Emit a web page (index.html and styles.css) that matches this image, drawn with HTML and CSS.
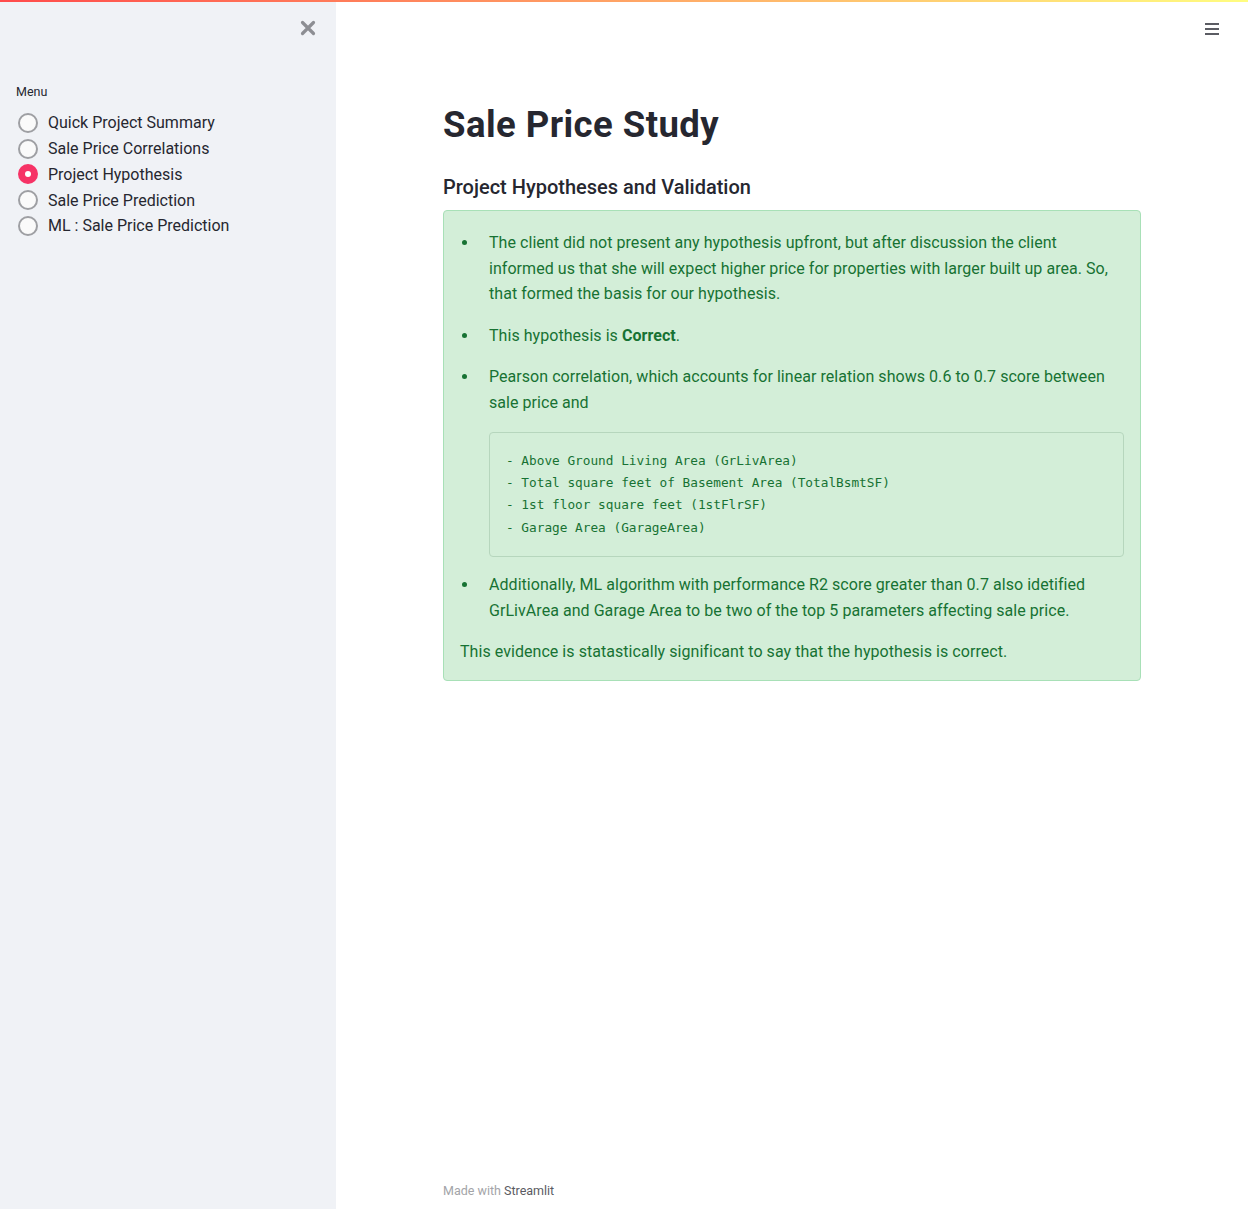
FILE: index.html
```html
<!DOCTYPE html>
<html>
<head>
<meta charset="utf-8">
<link rel="stylesheet" href="styles.css">
</head>
<body>
<div class="decoration"></div>
<div class="app">
  <aside class="sidebar">
    <div class="close-row">
      <svg class="close" width="16" height="16" viewBox="0 0 16 16"><path d="M2.5 2.5 L13.5 13.5 M13.5 2.5 L2.5 13.5" stroke="#8d8e93" stroke-width="3.2" stroke-linecap="round"/></svg>
    </div>
    <div class="menu-label">Menu</div>
    <div class="radios">
      <div class="radio"><span class="dot"></span><span>Quick Project Summary</span></div>
      <div class="radio"><span class="dot"></span><span>Sale Price Correlations</span></div>
      <div class="radio on"><span class="dot"></span><span>Project Hypothesis</span></div>
      <div class="radio"><span class="dot"></span><span>Sale Price Prediction</span></div>
      <div class="radio"><span class="dot"></span><span>ML : Sale Price Prediction</span></div>
    </div>
  </aside>
  <main class="main">
    <div class="topbar">
      <svg class="burger" width="16" height="14" viewBox="0 0 16 14"><path d="M1 2h14M1 7h14M1 12h14" stroke="#262730" stroke-width="1.6"/></svg>
    </div>
    <div class="block">
      <h1 class="title">Sale Price Study</h1>
      <h3 class="subtitle">Project Hypotheses and Validation</h3>
      <div class="success">
        <ul class="list">
          <li>The client did not present any hypothesis upfront, but after discussion the client informed us that she will expect higher price for properties with larger built up area. So, that formed the basis for our hypothesis.</li>
          <li>This hypothesis is <b>Correct</b>.</li>
          <li class="with-code">Pearson correlation, which accounts for linear relation shows 0.6 to 0.7 score between sale price and
            <pre class="code">- Above Ground Living Area (GrLivArea)
- Total square feet of Basement Area (TotalBsmtSF)
- 1st floor square feet (1stFlrSF)
- Garage Area (GarageArea)</pre>
          </li>
          <li>Additionally, ML algorithm with performance R2 score greater than 0.7 also idetified GrLivArea and Garage Area to be two of the top 5 parameters affecting sale price.</li>
        </ul>
        <p class="last">This evidence is statastically significant to say that the hypothesis is correct.</p>
      </div>
    </div>
    <footer class="footer">Made with <span class="brand">Streamlit</span></footer>
  </main>
</div>
</body>
</html>
```

FILE: styles.css
```css
* { box-sizing: border-box; }
html, body { margin: 0; padding: 0; height: 100%; }
body {
  font-family: Roboto, "Noto Sans", "Liberation Sans", sans-serif;
  color: #262730;
  background: #fff;
}
.decoration {
  position: fixed; top: 0; left: 0; right: 0; height: 2px; z-index: 10;
  background: linear-gradient(90deg, #ff4b4b, #fffd80);
}
.app { display: flex; min-height: 1209px; }
.sidebar {
  width: 336px; flex: none; background: #f0f2f6;
  padding: 0 16px;
}
.close-row { display: flex; justify-content: flex-end; padding: 20px 4px 0 0; height: 36px; }
.menu-label { margin-top: 48px; font-size: 12.5px; color: #262730; height: 16px; line-height: 16px; }
.radios { margin-top: 10px; display: flex; flex-direction: column; }
.radio { display: flex; align-items: center; height: 25.75px; font-size: 16px; color: #262730; }
.dot {
  width: 20px; height: 20px; border-radius: 50%; border: 2px solid #9e9fa3;
  background: #fafafa; margin: 0 10px 0 2px; flex: none; position: relative;
}
.radio.on .dot { background: #f63366; border-color: #f63366; }
.radio.on .dot::after {
  content: ""; position: absolute; left: 5px; top: 5px; width: 6px; height: 6px; border-radius: 50%; background: #fff;
}
.main { flex: 1; display: flex; flex-direction: column; }
.topbar { height: 58px; display: flex; justify-content: flex-end; padding: 22px 28px 0 0; }
.block { width: 698px; margin-left: 107px; flex: 1; }
.title { font-size: 36.5px; font-weight: 700; margin: 45px 0 0; line-height: 44px; letter-spacing: 0.45px; }
.subtitle { font-size: 20px; font-weight: 500; margin: 27px 0 0; line-height: 26px; }
.success {
  margin-top: 10px;
  background: #d3eed8; border: 1px solid #a8e0b7; border-radius: 4px;
  color: #177233; font-size: 16px; line-height: 25.6px; letter-spacing: 0.05px;
  padding: 19px 20px 15px 16px;
}
.list { margin: 0; padding-left: 29px; list-style: none; }
.list li { margin-bottom: 16px; position: relative; }
.list li.with-code { margin-bottom: 15px; }
.list li::before {
  content: ""; position: absolute; left: -27px; top: 10px;
  width: 5px; height: 5px; border-radius: 50%; background: #177233;
}
.list b { font-weight: 700; }
.code {
  margin: 16px -4px 0 0; padding: 17px 16px 17px;
  border: 1px solid #b6d6bd; border-radius: 4px; background: #d3eed8;
  font-family: "DejaVu Sans Mono", "Liberation Mono", monospace; font-size: 12.75px; line-height: 22.4px;
  letter-spacing: 0; color: #177233;
}
.last { margin: 0; }
.footer { margin: 0 0 11px 107px; font-size: 12.5px; color: #a3a4a8; }
.brand { color: #5a5b62; }
```
